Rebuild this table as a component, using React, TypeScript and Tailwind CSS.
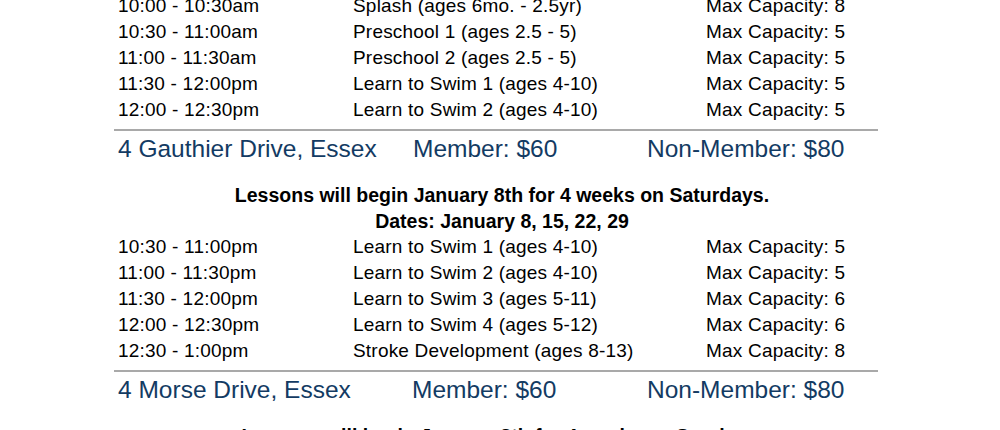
const sat = [
  ["10:00 - 10:30am", "Splash (ages 6mo. - 2.5yr)", "Max Capacity: 8"],
  ["10:30 - 11:00am", "Preschool 1 (ages 2.5 - 5)", "Max Capacity: 5"],
  ["11:00 - 11:30am", "Preschool 2 (ages 2.5 - 5)", "Max Capacity: 5"],
  ["11:30 - 12:00pm", "Learn to Swim 1 (ages 4-10)", "Max Capacity: 5"],
  ["12:00 - 12:30pm", "Learn to Swim 2 (ages 4-10)", "Max Capacity: 5"],
];

const gauthier = [
  ["10:30 - 11:00pm", "Learn to Swim 1 (ages 4-10)", "Max Capacity: 5"],
  ["11:00 - 11:30pm", "Learn to Swim 2 (ages 4-10)", "Max Capacity: 5"],
  ["11:30 - 12:00pm", "Learn to Swim 3 (ages 5-11)", "Max Capacity: 6"],
  ["12:00 - 12:30pm", "Learn to Swim 4 (ages 5-12)", "Max Capacity: 6"],
  ["12:30 - 1:00pm", "Stroke Development (ages 8-13)", "Max Capacity: 8"],
];

function Rows({ rows }: { rows: string[][] }) {
  return (
    <div className="pl-[4px]">
      {rows.map((r) => (
        <div
          key={r[0]}
          className="grid grid-cols-[235px_353px_1fr] text-[19px] leading-[26px] tracking-[0.2px] text-black whitespace-nowrap"
        >
          <span>{r[0]}</span>
          <span>{r[1]}</span>
          <span>{r[2]}</span>
        </div>
      ))}
    </div>
  );
}

function Location({ name, memberCol }: { name: string; memberCol: string }) {
  return (
    <div
      className={`pl-[4px] grid ${memberCol} text-[24.5px] leading-[30px] text-[#133b63] whitespace-nowrap`}
    >
      <span>{name}</span>
      <span>Member: $60</span>
      <span>Non-Member: $80</span>
    </div>
  );
}

function Divider() {
  return <div className="h-[2px] bg-[#a9a9a9]" />;
}

export default function App() {
  return (
    <div className="w-[1000px] h-[430px] overflow-hidden bg-white font-['Liberation_Sans',Arial,sans-serif]">
      <div className="ml-[114px] w-[764px] mt-[-7px]">
        <Rows rows={sat} />
        <div className="mt-[6px] mb-[3px]">
          <Divider />
        </div>
        <Location name="4 Gauthier Drive, Essex" memberCol="grid-cols-[295px_234px_1fr]" />
      </div>

      <div className="mt-[18px] pl-[4px] text-center text-[19.5px] leading-[26px] font-bold text-black">
        <p>Lessons will begin January 8th for 4 weeks on Saturdays.</p>
        <p>Dates: January 8, 15, 22, 29</p>
      </div>

      <div className="ml-[114px] w-[764px]">
        <Rows rows={gauthier} />
        <div className="mt-[6px] mb-[3px]">
          <Divider />
        </div>
        <Location name="4 Morse Drive, Essex" memberCol="grid-cols-[294px_235px_1fr]" />
      </div>

      <div className="mt-[18px] pl-[4px] text-center text-[19.5px] leading-[26px] font-bold text-black">
        <p>Lessons will begin January 8th for 4 weeks on Sundays.</p>
      </div>
    </div>
  );
}
